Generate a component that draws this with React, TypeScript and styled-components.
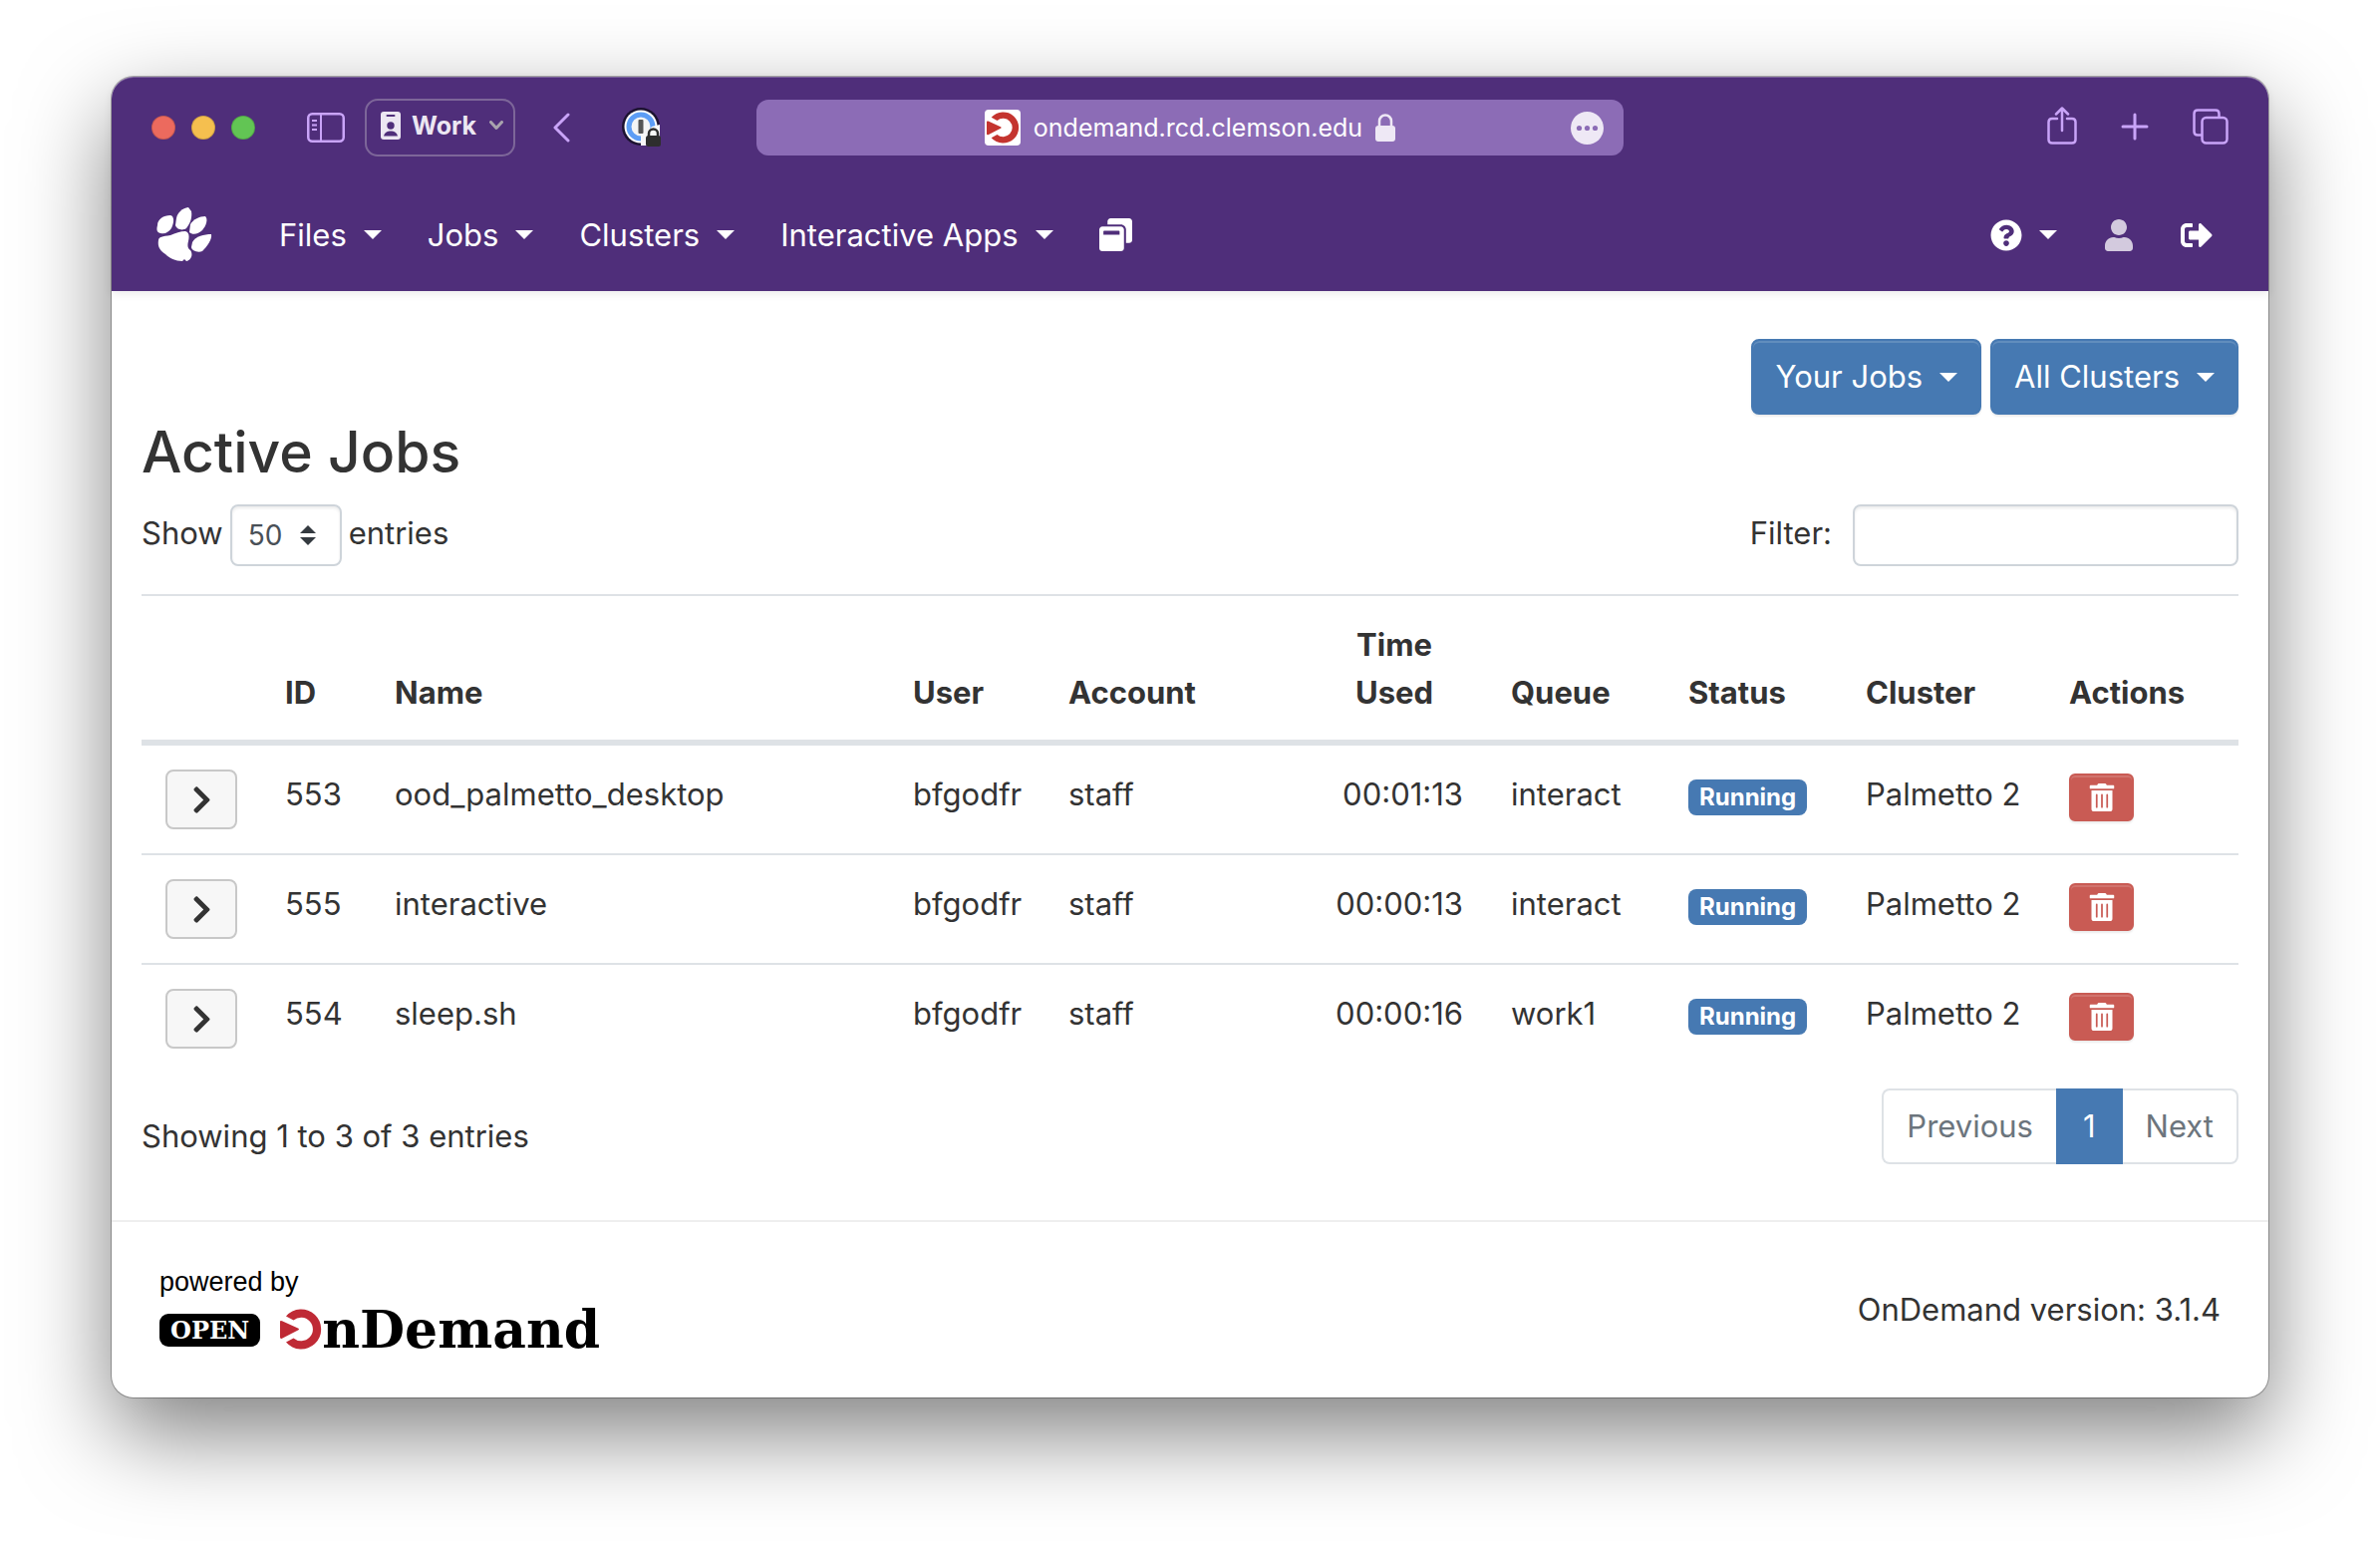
import React, { useState } from "react";
import styled, { createGlobalStyle, css } from "styled-components";
import {
  FaChevronRight,
  FaQuestionCircle,
  FaSignOutAlt,
  FaTrashAlt,
  FaUser,
  FaWindowRestore,
} from "react-icons/fa";

const color = {
  purple: "#4f2e7a",
  lilac: "#c9a4f8",
  address: "#8c6cb6",
  blue: "#4679b2",
  red: "#c95b54",
  text: "#333333",
  muted: "#6c757d",
  line: "#dee2e6",
  field: "#ced4da",
};

const GlobalStyle = createGlobalStyle`
  *, *::before, *::after { box-sizing: border-box; }
  body {
    margin: 0;
    background: #ffffff;
    color: ${color.text};
    font-family: Inter, "Liberation Sans", sans-serif;
    font-size: 31px;
    line-height: 48px;
  }
  button, input, select {
    font: inherit;
    color: inherit;
    margin: 0;
  }
  button { cursor: pointer; }
  svg { display: block; flex: none; }
`;

const Desktop = styled.div`
  padding: 77px 112px 148px;
  overflow: hidden;
`;

const BrowserWindow = styled.div`
  border-radius: 22px;
  background: #ffffff;
  box-shadow: 0 0 0 1px rgba(0, 0, 0, 0.28), 0 36px 90px rgba(0, 0, 0, 0.5);
`;

const Header = styled.header`
  border-radius: 22px 22px 0 0;
  background: ${color.purple};
  color: #ffffff;
  box-shadow: inset 0 1px 0 rgba(255, 255, 255, 0.25), 0 3px 8px rgba(0, 0, 0, 0.08);
`;

const TitleBar = styled.div`
  display: flex;
  align-items: center;
  height: 102px;
  padding: 0 40px;
`;

const TitleSide = styled.div<{ $end?: boolean }>`
  display: flex;
  flex: 1 1 0;
  align-items: center;
  justify-content: ${(p) => (p.$end ? "flex-end" : "flex-start")};
  gap: ${(p) => (p.$end ? "44px" : "0")};
`;

const Lights = styled.div`
  display: flex;
  gap: 16px;
  margin-right: 52px;
`;

const Light = styled.button<{ $fill: string }>`
  width: 24px;
  height: 24px;
  padding: 0;
  border: 1px solid rgba(0, 0, 0, 0.15);
  border-radius: 50%;
  background: ${(p) => p.$fill};
`;

const IconButton = styled.button`
  display: flex;
  align-items: center;
  justify-content: center;
  padding: 0;
  border: 0;
  background: none;
  color: ${color.lilac};
`;

const ProfileButton = styled.button`
  display: flex;
  align-items: center;
  height: 58px;
  margin: 0 38px 0 20px;
  padding: 0 10px 4px 14px;
  border: 2px solid #7d6699;
  border-radius: 13px;
  background: none;
  color: #ece7f2;
  font-size: 25px;
  font-weight: 700;
  line-height: 32px;

  span { margin: 0 13px 0 11px; }
`;

const ExtensionButton = styled(IconButton)`
  margin-left: 52px;
`;

const AddressBar = styled.div`
  display: grid;
  flex: 0 1 870px;
  grid-template-columns: 1fr auto 1fr;
  align-items: center;
  height: 56px;
  padding: 0 20px;
  border-radius: 12px;
  background: ${color.address};
  font-size: 25px;
  line-height: 32px;
`;

const Address = styled.div`
  display: flex;
  grid-column: 2;
  align-items: center;
  gap: 13px;
`;

const MoreButton = styled(IconButton)`
  justify-self: end;
`;

const NavBar = styled.nav`
  display: flex;
  align-items: center;
  height: 113px;
  padding: 0 56px 0 45px;
`;

const NavLinks = styled.div`
  display: flex;
  align-items: center;
  gap: 46px;
  margin-left: 67px;
`;

const NavTools = styled(NavLinks)`
  margin-left: auto;
`;

const NavLink = styled.a`
  display: flex;
  align-items: center;
  color: #ffffff;
  text-decoration: none;
  white-space: nowrap;
`;

const MutedLink = styled(NavLink)`
  color: #d3cade;
`;

const Caret = styled.span`
  width: 0;
  height: 0;
  margin-left: 17px;
  border: 9px solid transparent;
  border-top-color: currentColor;
  border-bottom: 0;
`;

const Main = styled.main`
  padding: 48px 30px 56px;
`;

const Toolbar = styled.div`
  display: flex;
  justify-content: flex-end;
  gap: 9px;
`;

const raised = css`
  box-shadow: inset 0 2px 0 rgba(255, 255, 255, 0.15), 0 2px 2px rgba(0, 0, 0, 0.075);
`;

const PrimaryButton = styled.button`
  display: flex;
  align-items: center;
  height: 76px;
  padding: 0 22px;
  border: 2px solid ${color.blue};
  border-radius: 8px;
  background: ${color.blue};
  color: #ffffff;
  ${raised}
`;

const Title = styled.h2`
  margin: 0 0 14px;
  font-size: 57px;
  font-weight: 500;
  line-height: 76px;
`;

const Controls = styled.div`
  display: flex;
  justify-content: space-between;
  margin-bottom: 28px;
`;

const ControlLabel = styled.label<{ $gap: number }>`
  display: flex;
  gap: ${(p) => p.$gap}px;

  > span { padding-top: 5px; }
`;

const SelectBox = styled.div`
  position: relative;

  svg {
    position: absolute;
    top: 21px;
    right: 26px;
    pointer-events: none;
  }
`;

const field = css`
  height: 62px;
  border: 2px solid ${color.field};
  border-radius: 8px;
  background: #ffffff;
  box-shadow: inset 0 2px 3px rgba(0, 0, 0, 0.08);
  outline: none;
`;

const LengthSelect = styled.select`
  ${field}
  width: 112px;
  padding: 0 16px;
  color: #495057;
  font-size: 28px;
  appearance: none;
`;

const FilterInput = styled.input`
  ${field}
  width: 387px;
  padding: 0 16px;
`;

const JobsTable = styled.table`
  width: 100%;
  border-spacing: 0;
  border-top: 2px solid ${color.line};
  table-layout: fixed;

  th, td {
    padding: 24px;
    text-align: left;
    vertical-align: top;
  }
  th {
    padding: 25px 24px 23px;
    border-bottom: 6px solid ${color.line};
    font-weight: 700;
    vertical-align: bottom;
  }
  td { height: 108px; white-space: nowrap; }
  tr + tr td { height: 110px; border-top: 2px solid ${color.line}; }
`;

const TimeHead = styled.th`
  && { text-align: center; }
`;

const CellText = styled.span<{ $right?: boolean }>`
  display: block;
  padding-top: 1px;
  text-align: ${(p) => (p.$right ? "right" : "left")};
`;

const ExpandButton = styled.button`
  display: flex;
  align-items: center;
  justify-content: center;
  width: 72px;
  height: 60px;
  padding: 0;
  border: 2px solid #c8c8c8;
  border-radius: 8px;
  background: #f7f7f7;
`;

const Badge = styled.span`
  display: block;
  width: max-content;
  height: 36px;
  margin-top: 10px;
  padding: 0 11px;
  border-radius: 8px;
  background: ${color.blue};
  color: #ffffff;
  font-size: 24px;
  font-weight: 700;
  line-height: 36px;
`;

const DeleteButton = styled.button`
  display: flex;
  align-items: center;
  justify-content: center;
  width: 65px;
  height: 48px;
  margin-top: 4px;
  padding: 0;
  border: 2px solid ${color.red};
  border-radius: 6px;
  background: ${color.red};
  color: #ffffff;
  ${raised}
`;

const TableFooter = styled.div`
  display: flex;
  justify-content: space-between;
  margin-top: 16px;

  p { margin: 24px 0 0; }
`;

const Pagination = styled.div`
  display: flex;
`;

const PageButton = styled.button<{ $active?: boolean }>`
  height: 76px;
  padding: 0 ${(p) => (p.$active ? "25px" : "23px")};
  border: 2px solid ${(p) => (p.$active ? color.blue : color.line)};
  background: ${(p) => (p.$active ? color.blue : "#ffffff")};
  color: ${(p) => (p.$active ? "#ffffff" : color.muted)};

  &:first-child { border-right: 0; border-radius: 8px 0 0 8px; }
  &:last-child { border-left: 0; border-radius: 0 8px 8px 0; }
`;

const Footer = styled.footer`
  display: flex;
  align-items: center;
  justify-content: space-between;
  height: 178px;
  padding: 0 48px;
  border-top: 2px solid #eeeeee;
`;

const PoweredBy = styled.a`
  color: #000000;
  font-family: "Liberation Sans", Arial, sans-serif;
  font-size: 27px;
  line-height: 32px;
  text-decoration: none;
`;

const Brand = styled.div`
  display: flex;
  align-items: center;
  margin-top: 8px;
  font-family: "DejaVu Serif", serif;
  font-weight: 700;
`;

const OpenTag = styled.span`
  margin-right: 20px;
  padding: 0 11px;
  border-radius: 9px;
  background: #000000;
  color: #ffffff;
  font-size: 24px;
  line-height: 33px;
`;

const BrandName = styled.span`
  font-size: 52px;
  line-height: 48px;
`;

const PawIcon = () => (
  <svg width="56" height="56" viewBox="0 0 56 56" fill="#ffffff" aria-hidden="true">
    <path d="M2 33C2 30 6 29 14 28C19 26 24 24 29 24C33 25 33 29 32 34C31 38 31 41 34 43C37 47 35 53 30 54L28 52L26 54C19 54 13 51 9 47C3 43 1 39 2 33Z" />
    <path d="M1 18C1 12 7 8 14 8C18 9 18 15 15 21C12 25 9 27 4 26C0 25 0 22 1 18Z" />
    <path d="M20 11C21 5 26 1 32 0L35 4C36 10 34 16 30 21C26 24 20 22 19 18Z" />
    <path d="M34 17C37 12 43 9 49 9C52 12 50 18 46 23C42 27 36 28 33 25Z" />
    <path d="M36 35C39 29 48 27 55 27C56 32 51 39 46 44C41 46 35 43 35 40Z" />
  </svg>
);

const OnDemandShape = ({ fill }: { fill: string }) => (
  <g fill={fill}>
    <path d="M6 7.500A20 20 0 1 1 6 33.500L13.500 29.500A11.800 11.800 0 1 0 13.500 11.500Z" />
    <path d="M0 13Q0 11.500 2 12.300L18 19.500Q20 20.500 18 21.500L2 29.700Q0 30.500 0 28.500Z" />
  </g>
);

const jobs = [
  { id: "553", name: "ood_palmetto_desktop", time: "00:01:13", queue: "interact" },
  { id: "555", name: "interactive", time: "00:00:13", queue: "interact" },
  { id: "554", name: "sleep.sh", time: "00:00:16", queue: "work1" },
];

const columnWidths = [120, 110, undefined, 156, 258, 186, 178, 178, 204, 194];

const menus = ["Files", "Jobs", "Clusters", "Interactive Apps"];

const BrowserChrome = () => (
  <TitleBar>
    <TitleSide>
      <Lights>
        <Light $fill="#ec6a5e" aria-label="Close" />
        <Light $fill="#f5bf4f" aria-label="Minimize" />
        <Light $fill="#62c554" aria-label="Zoom" />
      </Lights>
      <IconButton aria-label="Sidebar">
        <svg width="38" height="30" viewBox="0 0 38 30" fill="none" stroke="currentColor" strokeWidth="2.5">
          <rect x="1.25" y="1.25" width="35.5" height="27.5" rx="4" />
          <path d="M14 1V29M5 8H10M5 12.5H10M5 17H10" strokeWidth="2" />
        </svg>
      </IconButton>
      <ProfileButton>
        <svg width="20" height="28" viewBox="0 0 20 28" aria-hidden="true">
          <rect width="20" height="28" rx="3" fill="currentColor" />
          <path d="M6.500 4H13.500" stroke={color.purple} strokeWidth="2" strokeLinecap="round" />
          <circle cx="10" cy="14" r="3.700" fill={color.purple} />
          <path d="M3 24.500C4 20.500 7 19.500 10 19.500S16 20.500 17 24.500Z" fill={color.purple} />
        </svg>
        <span>Work</span>
        <svg width="14" height="10" viewBox="0 0 14 10" fill="none" stroke="#a9a3ad" strokeWidth="3" aria-hidden="true">
          <path d="M1.500 1.500L7 7.500L12.500 1.500" strokeLinecap="round" strokeLinejoin="round" />
        </svg>
      </ProfileButton>
      <IconButton aria-label="Back">
        <svg width="17" height="30" viewBox="0 0 17 30" fill="none" stroke="currentColor" strokeWidth="3">
          <path d="M15 2L2 15L15 28" strokeLinecap="round" strokeLinejoin="round" />
        </svg>
      </IconButton>
      <ExtensionButton aria-label="Password manager">
        <svg width="40" height="40" viewBox="0 0 40 40">
          <circle cx="19" cy="19" r="19" fill="#1c1230" />
          <circle cx="19" cy="19" r="16.500" fill="#ffffff" />
          <circle cx="19" cy="19" r="12" fill="#f4f4f4" stroke="#5d9df5" strokeWidth="5" />
          <rect x="16.500" y="12" width="5" height="14" rx="1" fill="#555555" />
          <path d="M19 26H24L30 19L38 17V38H19Z" fill="#f8f8f8" />
          <rect x="24" y="28" width="15" height="11" rx="2.500" fill="#2e2e2e" />
          <path d="M27 29V26a4.500 4.500 0 0 1 9 0V29" fill="none" stroke="#2e2e2e" strokeWidth="2.500" />
        </svg>
      </ExtensionButton>
    </TitleSide>
    <AddressBar>
      <Address>
        <svg width="36" height="36" viewBox="0 0 36 36" aria-hidden="true">
          <rect width="36" height="36" rx="4" fill="#ffffff" />
          <g transform="translate(2 2) scale(0.780)">
            <OnDemandShape fill="#c4342f" />
          </g>
        </svg>
        <span>ondemand.rcd.clemson.edu</span>
        <svg width="20" height="28" viewBox="0 0 20 28" fill="#eee8f5" aria-hidden="true">
          <rect y="12" width="20" height="16" rx="3" />
          <path d="M4 13V7.500a6 6 0 0 1 12 0V13" fill="none" stroke="#eee8f5" strokeWidth="2.500" />
        </svg>
      </Address>
      <MoreButton aria-label="Page menu">
        <svg width="33" height="33" viewBox="0 0 33 33">
          <circle cx="16.500" cy="16.500" r="16.500" fill="#eee8f5" />
          <g fill={color.address}>
            <circle cx="8.500" cy="16.500" r="2.600" />
            <circle cx="16.500" cy="16.500" r="2.600" />
            <circle cx="24.500" cy="16.500" r="2.600" />
          </g>
        </svg>
      </MoreButton>
    </AddressBar>
    <TitleSide $end>
      <IconButton aria-label="Share">
        <svg width="30" height="42" viewBox="0 0 30 42" fill="none" stroke="currentColor" strokeWidth="2.500" strokeLinecap="round" strokeLinejoin="round">
          <path d="M10 12H5Q1.500 12 1.500 15.500V33Q1.500 36.500 5 36.500H25Q28.500 36.500 28.500 33V15.500Q28.500 12 25 12H20" />
          <path d="M15 24V2M9 7.500L15 1.500L21 7.500" />
        </svg>
      </IconButton>
      <IconButton aria-label="New tab">
        <svg width="28" height="30" viewBox="0 0 28 30" stroke="currentColor" strokeWidth="3" strokeLinecap="round">
          <path d="M14 2V26M2 14H26" />
        </svg>
      </IconButton>
      <IconButton aria-label="Tab overview">
        <svg width="36" height="38" viewBox="0 0 36 38" fill="none" stroke="currentColor" strokeWidth="2.500">
          <rect x="9.500" y="9" width="25" height="25.500" rx="4" />
          <path d="M9 26.500H5Q1.500 26.500 1.500 23V5Q1.500 1.500 5 1.500H23Q26.500 1.500 26.500 5V8.500" />
        </svg>
      </IconButton>
    </TitleSide>
  </TitleBar>
);

export default function App() {
  const [filter, setFilter] = useState("");
  const rows = jobs.filter((job) => job.name.includes(filter));

  return (
    <>
      <GlobalStyle />
      <Desktop>
        <BrowserWindow>
          <Header>
            <BrowserChrome />
            <NavBar>
              <NavLink href="#" aria-label="Home">
                <PawIcon />
              </NavLink>
              <NavLinks>
                {menus.map((menu) => (
                  <NavLink href="#" key={menu}>
                    {menu}
                    <Caret />
                  </NavLink>
                ))}
                <NavLink href="#" aria-label="My Interactive Sessions">
                  <FaWindowRestore size={33} />
                </NavLink>
              </NavLinks>
              <NavTools>
                <NavLink href="#" aria-label="Help">
                  <FaQuestionCircle size={32} />
                  <Caret />
                </NavLink>
                <MutedLink href="#" aria-label="Logged in user">
                  <FaUser size={32} />
                </MutedLink>
                <NavLink href="#" aria-label="Log out">
                  <FaSignOutAlt size={32} />
                </NavLink>
              </NavTools>
            </NavBar>
          </Header>

          <Main>
            <Toolbar>
              <PrimaryButton>
                Your Jobs
                <Caret />
              </PrimaryButton>
              <PrimaryButton>
                All Clusters
                <Caret />
              </PrimaryButton>
            </Toolbar>
            <Title>Active Jobs</Title>

            <Controls>
              <ControlLabel $gap={7}>
                <span>Show</span>
                <SelectBox>
                  <LengthSelect defaultValue="50" aria-label="Entries shown">
                    <option>10</option>
                    <option>25</option>
                    <option>50</option>
                    <option>100</option>
                  </LengthSelect>
                  <svg width="16" height="20" viewBox="0 0 16 20" fill="#343a40" aria-hidden="true">
                    <path d="M0 8L8 0L16 8ZM0 12H16L8 20Z" />
                  </svg>
                </SelectBox>
                <span>entries</span>
              </ControlLabel>
              <ControlLabel $gap={21}>
                <span>Filter:</span>
                <FilterInput type="search" value={filter} onChange={(e) => setFilter(e.target.value)} />
              </ControlLabel>
            </Controls>

            <JobsTable>
              <colgroup>
                {columnWidths.map((width, i) => (
                  <col key={i} width={width} />
                ))}
              </colgroup>
              <thead>
                <tr>
                  <th aria-label="Details" />
                  <th>ID</th>
                  <th>Name</th>
                  <th>User</th>
                  <th>Account</th>
                  <TimeHead>Time Used</TimeHead>
                  <th>Queue</th>
                  <th>Status</th>
                  <th>Cluster</th>
                  <th>Actions</th>
                </tr>
              </thead>
              <tbody>
                {rows.map((job) => (
                  <tr key={job.id}>
                    <td>
                      <ExpandButton aria-label={`Details of job ${job.id}`}>
                        <FaChevronRight size={31} />
                      </ExpandButton>
                    </td>
                    <td>
                      <CellText>{job.id}</CellText>
                    </td>
                    <td>
                      <CellText>{job.name}</CellText>
                    </td>
                    <td>
                      <CellText>bfgodfr</CellText>
                    </td>
                    <td>
                      <CellText>staff</CellText>
                    </td>
                    <td>
                      <CellText $right>{job.time}</CellText>
                    </td>
                    <td>
                      <CellText>{job.queue}</CellText>
                    </td>
                    <td>
                      <Badge>Running</Badge>
                    </td>
                    <td>
                      <CellText>Palmetto 2</CellText>
                    </td>
                    <td>
                      <DeleteButton aria-label={`Delete job ${job.id}`}>
                        <FaTrashAlt size={28} />
                      </DeleteButton>
                    </td>
                  </tr>
                ))}
              </tbody>
            </JobsTable>

            <TableFooter>
              <p>Showing 1 to 3 of 3 entries</p>
              <Pagination>
                <PageButton>Previous</PageButton>
                <PageButton $active>1</PageButton>
                <PageButton>Next</PageButton>
              </Pagination>
            </TableFooter>
          </Main>

          <Footer>
            <PoweredBy href="#">
              powered by
              <Brand>
                <OpenTag>OPEN</OpenTag>
                <svg width="42" height="42" viewBox="0 0 42 42" aria-hidden="true">
                  <OnDemandShape fill="#bf2a35" />
                </svg>
                <BrandName>nDemand</BrandName>
              </Brand>
            </PoweredBy>
            <span>OnDemand version: 3.1.4</span>
          </Footer>
        </BrowserWindow>
      </Desktop>
    </>
  );
}
